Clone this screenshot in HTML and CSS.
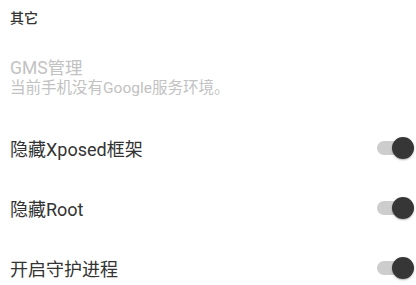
FILE: index.html
```html
<!DOCTYPE html>
<html>
<head>
<meta charset="utf-8">
<link rel="stylesheet" href="styles.css">
</head>
<body>
<div class="page">
  <div class="header">其它</div>
  <div class="item disabled">
    <div class="title">GMS管理</div>
    <div class="summary">当前手机没有Google服务环境。</div>
  </div>
  <div class="row">
    <div class="label">隐藏Xposed框架</div>
    <div class="switch"><div class="track"></div><div class="thumb"></div></div>
  </div>
  <div class="row">
    <div class="label">隐藏Root</div>
    <div class="switch"><div class="track"></div><div class="thumb"></div></div>
  </div>
  <div class="row">
    <div class="label">开启守护进程</div>
    <div class="switch"><div class="track"></div><div class="thumb"></div></div>
  </div>
</div>
</body>
</html>
```
FILE: styles.css
```css
html, body {
  margin: 0;
  padding: 0;
  background: #ffffff;
}
body {
  font-family: Roboto, "Noto Sans CJK SC", sans-serif;
  width: 416px;
  height: 285px;
  overflow: hidden;
}
.page {
  display: flex;
  flex-direction: column;
}
.header {
  height: 36px;
  line-height: 36px;
  padding-left: 10px;
  font-size: 14px;
  font-weight: 500;
  color: #333333;
}
.item {
  padding: 22px 10px 20px 10px;
}
.item .title {
  font-size: 17.5px;
  line-height: 20px;
  color: #c2c2c2;
}
.item .summary {
  font-size: 15.5px;
  line-height: 20px;
  color: #c2c2c2;
}
.row {
  height: 60px;
  display: flex;
  align-items: center;
  justify-content: space-between;
  padding-left: 10px;
  padding-right: 2px;
}
.label {
  font-size: 18px;
  color: #333333;
}
.switch {
  position: relative;
  width: 37px;
  height: 22px;
}
.track {
  position: absolute;
  left: 0;
  top: 4px;
  width: 33px;
  height: 14px;
  border-radius: 7px;
  background: #cdcdcd;
}
.thumb {
  position: absolute;
  right: 0;
  top: 0;
  width: 22px;
  height: 22px;
  border-radius: 50%;
  background: #363636;
  box-shadow: 0 1px 2px rgba(0,0,0,0.3);
}
```
